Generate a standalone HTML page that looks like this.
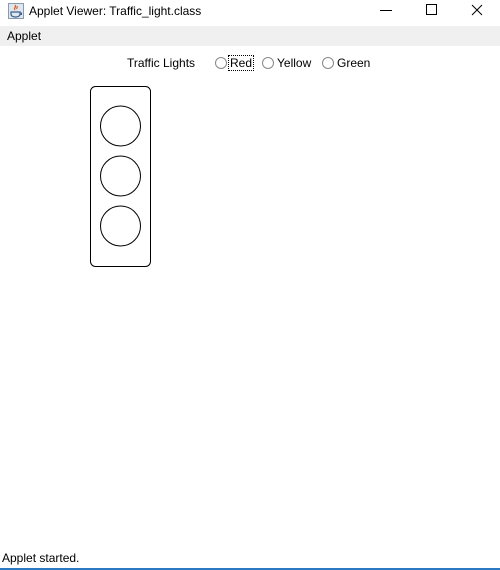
<!DOCTYPE html>
<html><head><style>
body{margin:0;width:500px;height:570px;background:#fff;position:relative;overflow:hidden;font-family:"Liberation Sans",sans-serif;font-size:12px;color:#000}
.a{position:absolute;white-space:nowrap}
.rb{position:absolute;width:10px;height:10px;border:1px solid #888;border-radius:50%;background:#fff}
</style></head><body>
<svg class="a" style="left:8px;top:3px" width="16" height="16" viewBox="0 0 16 16">
<rect x="0.5" y="0.5" width="15" height="15" fill="#dfe6ee" stroke="#8a9bb0"/>
<path d="M7 2c2 2-2 3 0 5M9 3c1 1-1 2 0 3" stroke="#e05a1a" fill="none" stroke-width="1.2"/>
<path d="M3 9h9v2c0 2-2 3-4.5 3S3 13 3 11z" fill="none" stroke="#3a5f8f" stroke-width="1.2"/>
<path d="M12 10h1.5v1.5H12" fill="none" stroke="#3a5f8f"/>
</svg>
<div class="a" style="left:29px;top:4px;font-size:12px">Applet Viewer: Traffic_light.class</div>
<div class="a" style="left:380px;top:10px;width:12px;height:1px;background:#000"></div>
<div class="a" style="left:426px;top:4px;width:9px;height:9px;border:1px solid #000"></div>
<svg class="a" style="left:471px;top:4px" width="12" height="12"><path d="M1 1L11 11M11 1L1 11" stroke="#000" stroke-width="1"/></svg>
<div class="a" style="left:0;top:26px;width:500px;height:20px;background:#f0f0f0"></div>
<div class="a" style="left:7px;top:29px">Applet</div>
<div class="a" style="left:127px;top:56px">Traffic Lights</div>
<div class="rb" style="left:215px;top:57px"></div>
<div class="a" style="left:228px;top:55px;border:1px dotted #000;padding:0 1px;line-height:14px">Red</div>
<div class="rb" style="left:262px;top:57px"></div>
<div class="a" style="left:277px;top:56px">Yellow</div>
<div class="rb" style="left:322px;top:57px"></div>
<div class="a" style="left:337px;top:56px">Green</div>
<svg class="a" style="left:0;top:0" width="500" height="570">
<rect x="90.5" y="86.5" width="60" height="180" rx="5" fill="none" stroke="#000"/>
<circle cx="120.5" cy="126" r="20" fill="none" stroke="#000"/>
<circle cx="120.5" cy="176" r="20" fill="none" stroke="#000"/>
<circle cx="120.5" cy="226" r="20" fill="none" stroke="#000"/>
</svg>
<div class="a" style="left:2px;top:551px">Applet started.</div>
<div class="a" style="left:0;top:568px;width:500px;height:2px;background:#2b79c2"></div>
</body></html>
